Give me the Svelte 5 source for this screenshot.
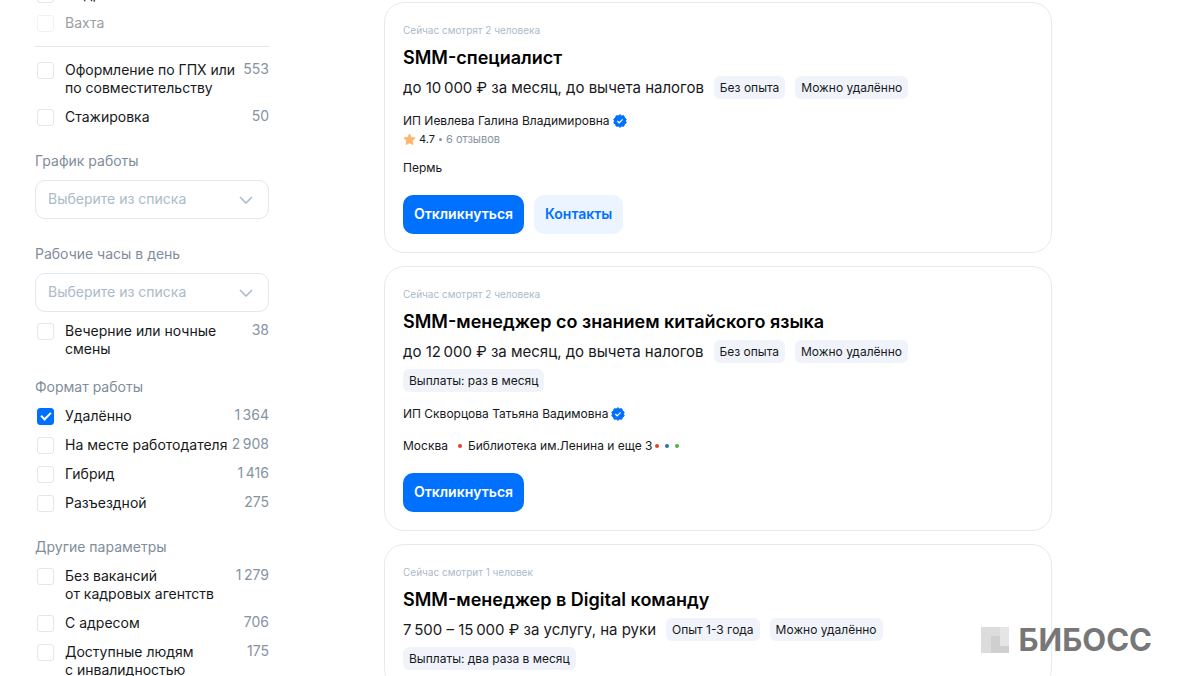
<script lang="ts">
	interface Option {
		label: string;
		count?: string;
		checked?: boolean;
		disabled?: boolean;
	}

	interface Vacancy {
		watching: string;
		title: string;
		salary: string;
		tags: string[];
		company?: string;
		rating?: string;
		reviews?: string;
		city?: string;
		metro?: string;
		lines?: string[];
		contacts?: boolean;
		actions?: boolean;
	}

	const employment: Option[] = [
		{ label: 'Подработка' },
		{ label: 'Вахта', disabled: true }
	];

	const contracts: Option[] = [
		{ label: 'Оформление по ГПХ или\nпо совместительству', count: '553' },
		{ label: 'Стажировка', count: '50' }
	];

	const hours: Option[] = [{ label: 'Вечерние или ночные\nсмены', count: '38' }];

	const formats: Option[] = [
		{ label: 'Удалённо', count: '1\u2009364', checked: true },
		{ label: 'На месте работодателя', count: '2\u2009908' },
		{ label: 'Гибрид', count: '1\u2009416' },
		{ label: 'Разъездной', count: '275' }
	];

	const other: Option[] = [
		{ label: 'Без вакансий\nот кадровых агентств', count: '1\u2009279' },
		{ label: 'С адресом', count: '706' },
		{ label: 'Доступные людям\nс инвалидностью', count: '175' }
	];

	const vacancies: Vacancy[] = [
		{
			watching: 'Сейчас смотрят 2 человека',
			title: 'SMM-специалист',
			salary: 'до 10\u2009000 ₽ за месяц, до вычета налогов',
			tags: ['Без опыта', 'Можно удалённо'],
			company: 'ИП Иевлева Галина Владимировна',
			rating: '4.7',
			reviews: '6 отзывов',
			city: 'Пермь',
			contacts: true,
			actions: true
		},
		{
			watching: 'Сейчас смотрят 2 человека',
			title: 'SMM-менеджер со знанием китайского языка',
			salary: 'до 12\u2009000 ₽ за месяц, до вычета налогов',
			tags: ['Без опыта', 'Можно удалённо', 'Выплаты: раз в месяц'],
			company: 'ИП Скворцова Татьяна Вадимовна',
			city: 'Москва',
			metro: 'Библиотека им.Ленина и еще 3',
			lines: ['#e8402a', '#2f6fb5', '#4fb04f'],
			actions: true
		},
		{
			watching: 'Сейчас смотрит 1 человек',
			title: 'SMM-менеджер в Digital команду',
			salary: '7\u2009500 – 15\u2009000 ₽ за услугу, на руки',
			tags: ['Опыт 1-3 года', 'Можно удалённо', 'Выплаты: два раза в месяц']
		}
	];
</script>

{#snippet optionList(options: Option[])}
	<div class="options">
		{#each options as option}
			<label class="option" class:disabled={option.disabled}>
				<input type="checkbox" checked={option.checked} disabled={option.disabled} />
				<span class="option-label">{option.label}</span>
				{#if option.count}
					<span class="option-count">{option.count}</span>
				{/if}
			</label>
		{/each}
	</div>
{/snippet}

{#snippet picker(id: string)}
	<div class="picker">
		<select {id}>
			<option>Выберите из списка</option>
		</select>
		<svg class="chevron" viewBox="0 0 14 8" aria-hidden="true">
			<path d="M1 1l6 6 6-6" fill="none" stroke="#aabbca" stroke-width="1.6" />
		</svg>
	</div>
{/snippet}

<div class="page">
	<aside class="filters">
		{@render optionList(employment)}
		<hr />
		{@render optionList(contracts)}

		<section>
			<label class="heading" for="schedule">График работы</label>
			{@render picker('schedule')}
		</section>

		<section>
			<label class="heading" for="hours">Рабочие часы в день</label>
			{@render picker('hours')}
			{@render optionList(hours)}
		</section>

		<section class="tight">
			<h3 class="heading">Формат работы</h3>
			{@render optionList(formats)}
		</section>

		<section>
			<h3 class="heading">Другие параметры</h3>
			{@render optionList(other)}
		</section>
	</aside>

	<main class="results">
		{#each vacancies as vacancy}
			<article class="card">
				<div class="watching">{vacancy.watching}</div>
				<h2 class="title">{vacancy.title}</h2>
				<div class="summary">
					<span class="salary">{vacancy.salary}</span>
					{#each vacancy.tags as tag}
						<span class="tag">{tag}</span>
					{/each}
				</div>

				{#if vacancy.company}
					<div class="company">
						{vacancy.company}
						<svg class="verified" viewBox="0 0 14 14" aria-hidden="true">
							<path
								d="M7 .7l1.7 1.2 2.1-.1.7 2 1.7 1.2-.7 2 .7 2-1.7 1.2-.7 2-2.1-.1L7 13.300l-1.700-1.200-2.100.1-.7-2L.8 9l.7-2-.7-2 1.700-1.200.7-2 2.100.1z"
								fill="#0070ff"
								stroke="#0070ff"
								stroke-linejoin="round"
							/>
							<path d="M4.300 7l1.900 1.800 3.400-3.400" fill="none" stroke="#fff" stroke-width="1.2" />
						</svg>
					</div>
				{/if}

				{#if vacancy.rating}
					<div class="rating">
						<svg class="star" viewBox="0 0 14 14" aria-hidden="true">
							<path
								d="M7 1l1.800 3.800 4.200.6-3 2.900.7 4.200L7 10.500l-3.700 2 .7-4.200-3-2.900 4.200-.6z"
								fill="#ffb56b"
								stroke="#ffb56b"
								stroke-linejoin="round"
							/>
						</svg>
						<span>{vacancy.rating}</span>
						<i class="dot"></i>
						<span class="reviews">{vacancy.reviews}</span>
					</div>
				{/if}

				{#if vacancy.city}
					<div class="place">
						<span>{vacancy.city}</span>
						{#if vacancy.metro && vacancy.lines}
							<span class="metro">
								<i class="line" style="background: {vacancy.lines[0]}"></i>
								{vacancy.metro}
							</span>
							<span class="lines">
								{#each vacancy.lines as color}
									<i class="line" style="background: {color}"></i>
								{/each}
							</span>
						{/if}
					</div>
				{/if}

				{#if vacancy.actions}
					<div class="actions">
						<button class="btn primary">Откликнуться</button>
						{#if vacancy.contacts}
							<button class="btn secondary">Контакты</button>
						{/if}
					</div>
				{/if}
			</article>
		{/each}
	</main>

	<div class="brand">
		<svg viewBox="0 0 28 26" aria-hidden="true">
			<rect width="28" height="26" fill="#dcdcdc" />
			<rect x="19" width="9" height="19" fill="#e4e6e5" />
			<path d="M10 9h9v10h9v7H10z" fill="#cfcfcf" />
		</svg>
		<span>БИБОСС</span>
	</div>
</div>

<style>
	:global(body) {
		background: #fff;
	}

	.page {
		position: relative;
		box-sizing: border-box;
		display: grid;
		grid-template-columns: 234px minmax(0, 1fr);
		column-gap: 115px;
		align-items: start;
		height: 100vh;
		padding: 0 128px 0 35px;
		overflow: hidden;
		font-family: Inter, 'Liberation Sans', sans-serif;
		font-size: 14px;
		line-height: 18px;
		color: #17191c;
	}

	/* filters */
	.filters {
		margin-top: -15px;
	}

	.options {
		display: flex;
		flex-direction: column;
		gap: 11px;
	}

	.option {
		display: flex;
		align-items: flex-start;
	}

	.option.disabled {
		color: #9c9ea1;
	}

	.option.disabled input {
		opacity: 0.5;
	}

	.option input {
		appearance: none;
		box-sizing: border-box;
		flex: none;
		width: 17px;
		height: 17px;
		margin: 1px 11px 0 2px;
		border: 1px solid #e0e7ef;
		border-radius: 3px;
		background: #fff;
	}

	.option input:checked {
		display: grid;
		place-items: center;
		border-color: #0070ff;
		background: #0070ff;
	}

	.option input:checked::before {
		content: '';
		box-sizing: border-box;
		width: 10px;
		height: 6px;
		margin-bottom: 3px;
		border: solid #fff;
		border-width: 0 0 2px 2px;
		transform: rotate(-45deg);
	}

	.option-label {
		flex: 1;
		white-space: pre;
	}

	.option-count {
		margin-top: -1px;
		color: #8593a2;
	}

	hr {
		height: 1px;
		margin: 14px 0;
		border: 0;
		background: #e0e7ef;
	}

	section {
		margin-top: 26px;
	}

	section.tight {
		margin-top: 20px;
	}

	.heading {
		display: block;
		margin: 0 0 10px;
		font-size: 14px;
		font-weight: 400;
		color: #7f8d9c;
	}

	h3.heading {
		margin-bottom: 11px;
	}

	.picker {
		position: relative;
	}

	.picker + .options {
		margin-top: 10px;
	}

	.picker select {
		appearance: none;
		display: block;
		box-sizing: border-box;
		width: 100%;
		height: 39px;
		padding: 0 40px 2px 12px;
		border: 1px solid #e0e7ef;
		border-radius: 10px;
		background: #fff;
		font: inherit;
		color: #aabbca;
	}

	.chevron {
		position: absolute;
		top: 16px;
		right: 16px;
		width: 14px;
		height: 8px;
		pointer-events: none;
	}

	/* vacancy cards */
	.results {
		display: flex;
		flex-direction: column;
		gap: 13px;
		margin-top: 2px;
	}

	.card {
		padding: 19px 18px 18px;
		border: 1px solid #e6e9f1;
		border-radius: 20px;
		font-size: 12px;
	}

	.watching {
		font-size: 10px;
		line-height: 16px;
		color: #aabbca;
	}

	.title {
		margin: 8px 0 6px;
		font-size: 18px;
		font-weight: 600;
		line-height: 24px;
		color: #000;
	}

	.summary {
		display: flex;
		flex-wrap: wrap;
		gap: 6px 10px;
		align-items: center;
	}

	.salary {
		font-size: 15px;
		line-height: 22px;
	}

	.tag {
		padding: 0 6px;
		border-radius: 6px;
		background: #f0f4fa;
		line-height: 23px;
	}

	.company {
		display: flex;
		align-items: center;
		gap: 3px;
		margin-top: 13px;
	}

	.verified {
		width: 14px;
		height: 14px;
	}

	.rating {
		display: flex;
		align-items: center;
		gap: 3px;
		font-size: 11px;
	}

	.star {
		width: 13px;
		height: 13px;
	}

	.dot {
		width: 3px;
		height: 3px;
		margin: 0 1px;
		border-radius: 50%;
		background: #8593a2;
	}

	.reviews {
		color: #8593a2;
	}

	.place {
		display: flex;
		align-items: center;
		margin-top: 14px;
	}

	.rating + .place {
		margin-top: 11px;
	}

	.metro {
		display: flex;
		align-items: center;
		gap: 6px;
		margin-left: 10px;
	}

	.lines {
		display: flex;
		gap: 6px;
		margin-left: 3px;
	}

	.line {
		width: 4px;
		height: 4px;
		border-radius: 50%;
	}

	.actions {
		display: flex;
		gap: 10px;
		margin-top: 18px;
	}

	.btn {
		height: 39px;
		padding: 0 11px 2px;
		border: 0;
		border-radius: 10px;
		font: 600 14px/18px Inter, 'Liberation Sans', sans-serif;
	}

	.primary {
		background: #0070ff;
		color: #fff;
	}

	.secondary {
		background: #ebf4ff;
		color: #0070ff;
	}

	/* watermark over the list */
	.brand {
		position: absolute;
		right: 28px;
		bottom: 19px;
		display: flex;
		align-items: center;
		gap: 10px;
		font-size: 31px;
		font-weight: 700;
		line-height: 34px;
		color: #777;
	}

	.brand svg {
		width: 28px;
		height: 26px;
	}
</style>
